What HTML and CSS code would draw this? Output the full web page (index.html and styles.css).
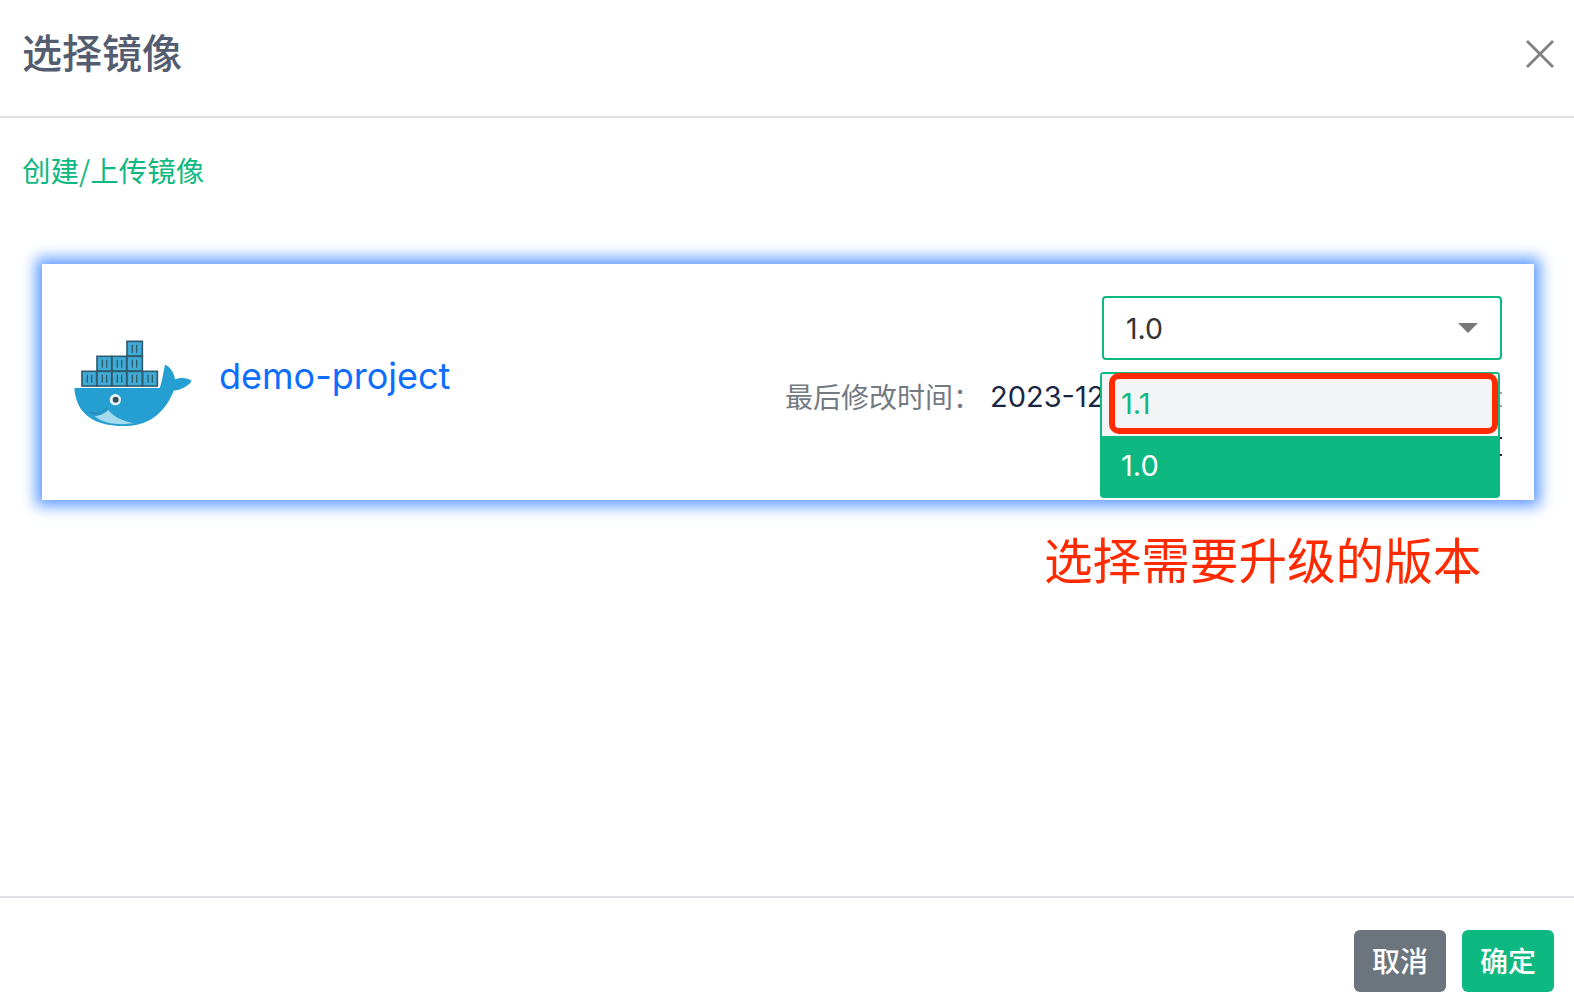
FILE: index.html
```html
<!DOCTYPE html>
<html lang="zh-CN">
<head>
<meta charset="utf-8">
<title>选择镜像</title>
<link rel="stylesheet" href="styles.css">
</head>
<body>
<div class="dialog">
  <header class="head">
    <h1 class="title">选择镜像</h1>
    <svg class="close" viewBox="0 0 28 28"><path d="M1 1L27 27M27 1L1 27"/></svg>
  </header>
  <main class="body">
    <a class="create">创建/上传镜像</a>
    <section class="card">
      <svg class="logo" viewBox="40 25 360 270">
        <path class="hull" d="M44 172 L300 172 C306 160 310 130 316 102 C328 106 344 124 346 146 C362 140 382 140 396 150 C388 166 362 178 342 180 C322 232 280 284 200 286 C120 288 50 262 44 172Z"/>
        <path class="jaw" d="M104 256 C122 256 136 248 146 238 C160 256 184 270 222 278 C180 284 132 280 104 256Z"/>
        <path class="mouth" d="M90 244 C106 252 126 250 142 232"/>
        <circle class="eye" cx="167" cy="207" r="17"/>
        <circle class="pupil" cx="168" cy="207" r="9"/>
        <g class="boxes">
          <rect x="202" y="32" width="46" height="44"/>
          <rect x="112" y="77" width="44" height="44"/>
          <rect x="157" y="77" width="44" height="44"/>
          <rect x="202" y="77" width="46" height="44"/>
          <rect x="67" y="122" width="44" height="44"/>
          <rect x="112" y="122" width="44" height="44"/>
          <rect x="157" y="122" width="44" height="44"/>
          <rect x="202" y="122" width="46" height="44"/>
          <rect x="249" y="122" width="44" height="44"/>
        </g>
        <path class="slats" d="M218 42V66M231 42V66M128 87V111M141 87V111M173 87V111M186 87V111M218 87V111M231 87V111M83 132V156M96 132V156M128 132V156M141 132V156M173 132V156M186 132V156M218 132V156M231 132V156M265 132V156M278 132V156"/>
      </svg>
      <a class="name">demo-project</a>
      <div class="meta">
        <span class="meta-label">最后修改时间：</span>
        <span class="meta-value">2023-12</span>
      </div>
      <div class="picker">
        <div class="select">
          <span>1.0</span>
          <i class="caret"></i>
        </div>
        <ul class="menu">
          <li class="opt opt-hover">1.1</li>
          <li class="opt opt-active">1.0</li>
        </ul>
        <div class="mark"></div>
        <div class="specks"></div>
      </div>
    </section>
    <p class="note">选择需要升级的版本</p>
  </main>
  <footer class="foot">
    <button class="btn btn-cancel">取消</button>
    <button class="btn btn-ok">确定</button>
  </footer>
</div>
</body>
</html>
```

FILE: styles.css
```css
* { box-sizing: border-box; }
html, body { margin: 0; height: 100%; background: #fff; }
body { font-family: Inter, "Noto Sans CJK SC", sans-serif; overflow: hidden; }
.dialog { display: flex; flex-direction: column; height: 1004px; }
.head {
  height: 118px;
  border-bottom: 2px solid #dfe1e6;
  padding: 0 20px 14px 22px;
  display: flex;
  align-items: center;
  justify-content: space-between;
}
.title { margin: 0; font-size: 40px; line-height: 1; font-weight: 500; color: #545c70; font-family: "Noto Sans CJK SC", sans-serif; }
.close { width: 28px; height: 28px; margin-top: 6px; }
.close path { stroke: #808080; stroke-width: 2.8; fill: none; }
.body { flex: 1; padding: 34px 40px 0 22px; display: flex; flex-direction: column; }
.create { font-size: 28.5px; line-height: 36px; color: #0db981; font-family: "Noto Sans CJK SC", sans-serif; }
.card {
  margin: 76px 0 0 20px;
  width: 1492px;
  height: 236px;
  background: #fff;
  box-shadow: 0 0 14px 6px #5e9bff;
  display: flex;
  align-items: center;
  padding: 0 32px 0 31px;
  position: relative;
}
.logo { width: 120px; height: 90px; flex: none; margin-top: 3px; filter: blur(.5px); }
.hull { fill: #259fd1; }
.jaw { fill: #a5d9ec; }
.mouth { fill: none; stroke: #2f7f9d; stroke-width: 3; }
.eye { fill: #e9f5f9; }
.pupil { fill: #35505c; }
.boxes rect { fill: #3fabd6; stroke: #2f5d6f; stroke-width: 5; }
.slats { stroke: #2f5d6f; stroke-width: 4; fill: none; }
.name { margin: -12px 0 0 26px; font-size: 36px; line-height: 44px; color: #0d6efd; flex: none; }
.meta { position: absolute; left: 743px; top: 112px; white-space: nowrap; display: flex; align-items: center; }
.meta-label { font-size: 28px; color: #737a82; font-family: "Noto Sans CJK SC", sans-serif; width: 205px; }
.meta-value { font-size: 29px; color: #1a2744; }
.picker { position: absolute; left: 1058px; top: 32px; width: 402px; }
.select {
  margin-left: 2px;
  width: 400px;
  height: 64px;
  border: 2px solid #0db981;
  border-radius: 4px;
  background: #fff;
  display: flex;
  align-items: center;
  justify-content: space-between;
  padding: 0 22px;
  font-size: 28.5px;
  color: #333;
}
.caret { width: 0; height: 0; border: 10px solid transparent; border-top: 10px solid #777; border-bottom: 0; }
.menu {
  position: absolute;
  left: 0;
  top: 76px;
  width: 400px;
  height: 126px;
  margin: 0;
  padding: 0;
  list-style: none;
  border-radius: 4px;
  background: #fff;
  overflow: hidden;
}
.opt { display: flex; align-items: center; padding: 0 21px; font-size: 29px; }
.opt-hover { height: 64px; background: #f3f4f6; color: #0db981; border: 2px solid #0db981; border-bottom: 0; padding: 0 0 4px 19px; }
.opt-active { height: 62px; background: #0db981; color: #fff; padding-bottom: 4px; }
.mark {
  position: absolute;
  left: 9px;
  top: 77px;
  width: 389px;
  height: 61px;
  border: 6px solid #ff2a00;
  border-radius: 10px;
}
.specks {
  position: absolute;
  left: 400px;
  top: 96px;
  width: 2px;
  height: 2px;
  background: #9aa0a6;
  box-shadow: 0 13px #9aa0a6, 0 45px #222, 0 62px #222;
}
.note { margin: 27px 0 0 1022px; font-size: 48.6px; line-height: 62px; color: #ff2a00; font-family: "Noto Sans CJK SC", sans-serif; white-space: nowrap; }
.foot {
  height: 108px;
  border-top: 2px solid #dfe1e6;
  display: flex;
  justify-content: flex-end;
  gap: 16px;
  padding: 32px 20px 0 0;
}
.btn {
  width: 92px;
  height: 62px;
  border: 0;
  border-radius: 6px;
  color: #fff;
  font-size: 28px;
  font-weight: 500;
  padding: 0 0 2px;
  font-family: "Noto Sans CJK SC", sans-serif;
}
.btn-cancel { background: #6c757d; }
.btn-ok { background: #0db981; }
```
